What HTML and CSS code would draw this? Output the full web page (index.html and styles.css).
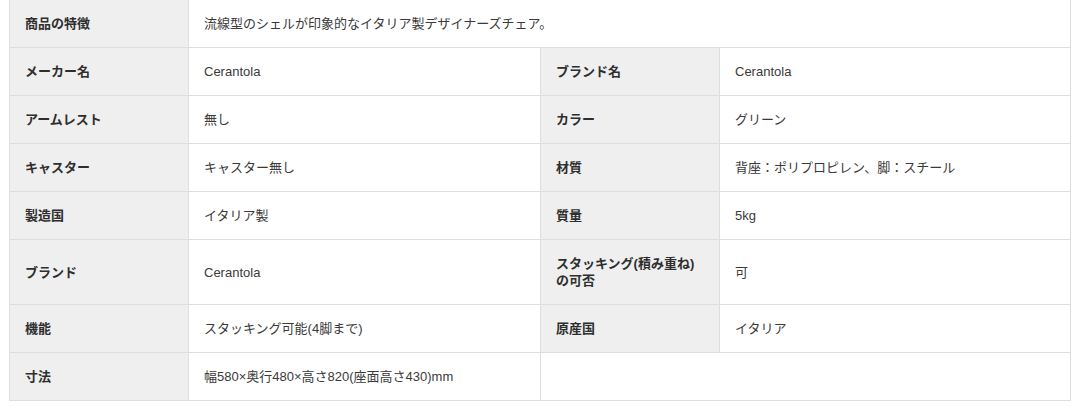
FILE: index.html
```html
<!DOCTYPE html>
<html lang="ja">
<head>
<meta charset="utf-8">
<title>商品仕様</title>
<link rel="stylesheet" href="styles.css">
</head>
<body>
<div class="spec">
  <div class="th">商品の特徴</div>
  <div class="td span3">流線型のシェルが印象的なイタリア製デザイナーズチェア。</div>

  <div class="th">メーカー名</div>
  <div class="td">Cerantola</div>
  <div class="th">ブランド名</div>
  <div class="td">Cerantola</div>

  <div class="th">アームレスト</div>
  <div class="td">無し</div>
  <div class="th">カラー</div>
  <div class="td">グリーン</div>

  <div class="th">キャスター</div>
  <div class="td">キャスター無し</div>
  <div class="th">材質</div>
  <div class="td">背座：ポリプロピレン、脚：スチール</div>

  <div class="th">製造国</div>
  <div class="td">イタリア製</div>
  <div class="th">質量</div>
  <div class="td">5kg</div>

  <div class="th">ブランド</div>
  <div class="td">Cerantola</div>
  <div class="th"><span>スタッキング(積み重ね)<br>の可否</span></div>
  <div class="td">可</div>

  <div class="th">機能</div>
  <div class="td">スタッキング可能(4脚まで)</div>
  <div class="th">原産国</div>
  <div class="td">イタリア</div>

  <div class="th">寸法</div>
  <div class="td">幅580×奥行480×高さ820(座面高さ430)mm</div>
  <div class="td span2"></div>
</div>
</body>
</html>
```

FILE: styles.css
```css
html, body {
  margin: 0;
  padding: 0;
  background: #ffffff;
}

body {
  font-family: "Liberation Sans", "Noto Sans CJK JP", sans-serif;
  font-size: 13px;
  color: #333333;
}

.spec {
  margin-left: 9px;
  width: 1060px;
  display: grid;
  grid-template-columns: 178px 351px 178px 350px;
  column-gap: 1px;
  row-gap: 1px;
  background: #dedede;
  border: 1px solid #dedede;
  border-top: none;
}

.th,
.td {
  padding: 15px 15px;
  line-height: 17px;
  display: flex;
  align-items: center;
}

.th {
  background: #efefef;
  font-weight: bold;
  color: #2e2e2e;
}

.td {
  background: #ffffff;
  color: #3a3a3a;
}

.span3 {
  grid-column: span 3;
}

.span2 {
  grid-column: span 2;
}
```
